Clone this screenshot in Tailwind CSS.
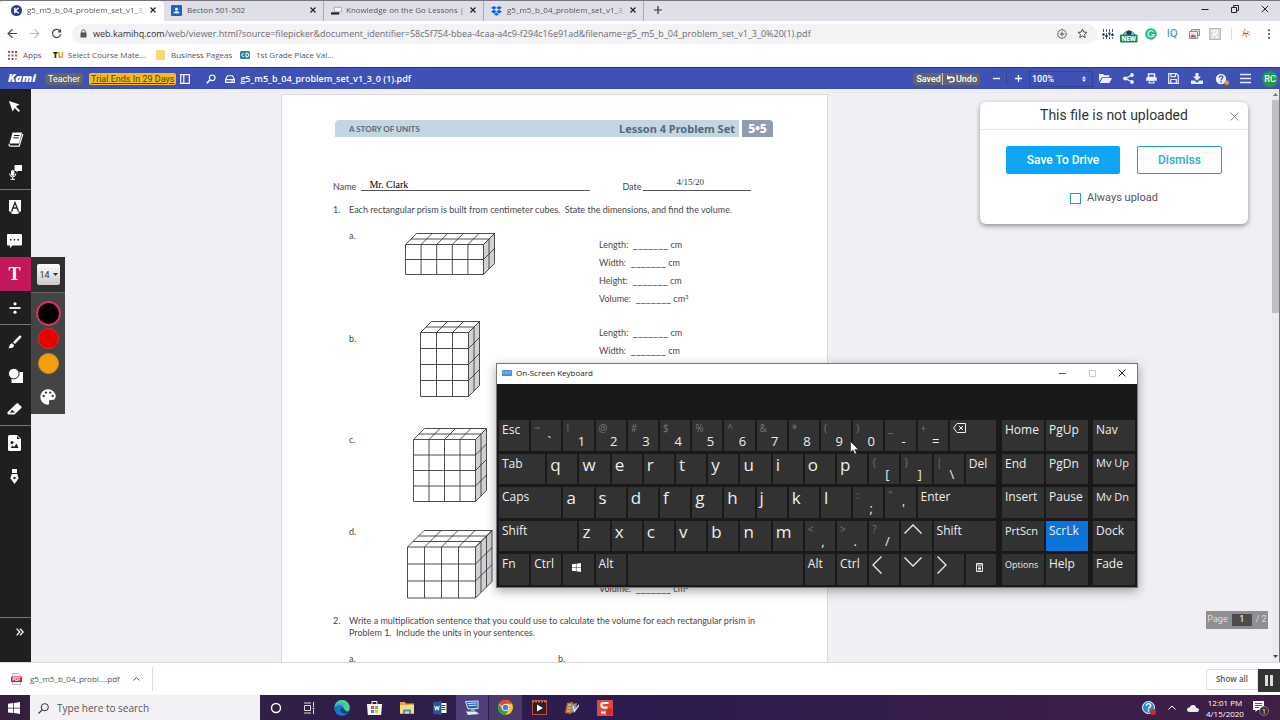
<!DOCTYPE html>
<html lang="en">
  <head>
    <meta charset="UTF-8" />
    <meta name="viewport" content="width=device-width, initial-scale=1.0" />
    <title>g5_m5_b_04_problem_set_v1_3_0 (1).pdf</title>
    <script src="https://cdn.jsdelivr.net/npm/@tailwindcss/browser@4"></script>
  </head>
  <body
    class="relative flex h-screen flex-col overflow-hidden border-t border-[#77737f] bg-white font-['Open_Sans','Noto_Sans',sans-serif] text-[#333]"
  >
    <!-- Tab strip -->
    <header class="flex h-5 shrink-0 bg-[#dfdfe8] text-[8px] text-[#55565c]">
      <div class="flex w-[164px] items-center rounded-t bg-white pr-[5px] pb-0.5 pl-[11px]">
        <svg class="size-[11px] shrink-0" viewBox="0 0 12 12">
          <circle cx="6" cy="6" r="6" fill="#2b3990" />
          <path d="M4.2 3v6M8.4 3 4.6 6.2 8.4 9" stroke="#fff" stroke-width="1.6" fill="none" />
        </svg>
        <span
          class="ml-[5px] flex-1 overflow-hidden whitespace-nowrap mask-r-from-90% mask-r-to-100%"
          >g5_m5_b_04_problem_set_v1_3_0 (1)</span
        >
        <button class="flex size-3 items-center justify-center" aria-label="Close tab">
          <svg class="size-[6px]" viewBox="0 0 6 6"><path d="M.5.5l5 5M5.5.5l-5 5" stroke="#222" stroke-width="1.2" /></svg>
        </button>
      </div>
      <div class="flex w-[160px] items-center border-r border-[#a9a9b4] pr-1 pb-0.5 pl-[7px]">
        <svg class="size-[11px] shrink-0" viewBox="0 0 12 12">
          <rect width="12" height="12" rx="1" fill="#1a66d0" />
          <circle cx="6" cy="4.6" r="1.6" fill="#fff" />
          <path d="M2.8 9c0-3 6.4-3 6.4 0z" fill="#fff" />
        </svg>
        <span class="ml-[5px] flex-1 whitespace-nowrap">Becton 501-502</span>
        <button class="flex size-3 items-center justify-center" aria-label="Close tab">
          <svg class="size-[6px]" viewBox="0 0 6 6"><path d="M.5.5l5 5M5.5.5l-5 5" stroke="#222" stroke-width="1.2" /></svg>
        </button>
      </div>
      <div class="flex w-[160px] items-center border-r border-[#a9a9b4] pr-1 pb-0.5 pl-[7px]">
        <svg class="size-[11px] shrink-0" viewBox="0 0 12 12">
          <path d="M3.5 2.5h8v5h-8z" fill="#f4f4f6" stroke="#888" stroke-width=".7" />
          <path d="M0 8h9v2.4H0z" fill="#222" />
        </svg>
        <span
          class="ml-1 flex-1 overflow-hidden whitespace-nowrap mask-r-from-95% mask-r-to-100%"
          >Knowledge on the Go Lessons | Virtual</span
        >
        <button class="flex size-3 items-center justify-center" aria-label="Close tab">
          <svg class="size-[6px]" viewBox="0 0 6 6"><path d="M.5.5l5 5M5.5.5l-5 5" stroke="#222" stroke-width="1.2" /></svg>
        </button>
      </div>
      <div class="flex w-[160px] items-center border-r border-[#a9a9b4] pr-1 pb-0.5 pl-[7px]">
        <svg class="size-[11px] shrink-0" viewBox="0 0 12 12">
          <path
            d="M3.3 1 0 3.1l3.3 2.1L6 3.1zM8.7 1 6 3.1l2.7 2.1L12 3.1zM0 7.3l3.3 2.1L6 7.3 3.3 5.2zM8.7 5.2 6 7.3l2.7 2.1L12 7.3zM3.4 10 6 11.7 8.6 10 6 8.1z"
            fill="#0a62f0"
          />
        </svg>
        <span
          class="ml-[5px] flex-1 overflow-hidden whitespace-nowrap mask-r-from-90% mask-r-to-100%"
          >g5_m5_b_04_problem_set_v1_3_0 (1)</span
        >
        <button class="flex size-3 items-center justify-center" aria-label="Close tab">
          <svg class="size-[6px]" viewBox="0 0 6 6"><path d="M.5.5l5 5M5.5.5l-5 5" stroke="#222" stroke-width="1.2" /></svg>
        </button>
      </div>
      <button class="flex w-7 items-center justify-center pb-0.5" aria-label="New tab">
        <svg class="size-2" viewBox="0 0 8 8"><path d="M4 0v8M0 4h8" stroke="#333" stroke-width="1.2" /></svg>
      </button>
      <div class="ml-auto flex pb-1">
        <button class="flex w-[30px] items-center justify-center" aria-label="Minimize">
          <svg class="size-2" viewBox="0 0 8 8"><path d="M.5 4.5h7" stroke="#222" /></svg>
        </button>
        <button class="flex w-[30px] items-center justify-center" aria-label="Restore">
          <svg class="size-2" viewBox="0 0 8 8">
            <path d="M.5 2.5h5v5h-5zM2.5 2.5v-2h5v5h-2" fill="none" stroke="#222" />
          </svg>
        </button>
        <button class="flex w-[30px] items-center justify-center" aria-label="Close">
          <svg class="size-2" viewBox="0 0 8 8"><path d="M.8.8l6.4 6.4M7.2.8.8 7.2" stroke="#222" /></svg>
        </button>
      </div>
    </header>

    <!-- Address bar -->
    <div class="flex h-[25px] shrink-0 items-center">
      <div class="flex w-[72px] items-center gap-[11px] pl-[7px]">
        <button aria-label="Back">
          <svg class="size-[11px]" viewBox="0 0 12 12"><path d="M11 6H1.5M6 1.2 1.2 6 6 10.8" stroke="#444" stroke-width="1.3" fill="none" /></svg>
        </button>
        <button aria-label="Forward">
          <svg class="size-[11px]" viewBox="0 0 12 12"><path d="M1 6h9.5M6 1.2 10.8 6 6 10.8" stroke="#bbb" stroke-width="1.2" fill="none" /></svg>
        </button>
        <button aria-label="Reload">
          <svg class="size-[11px]" viewBox="0 0 12 12">
            <path d="M10 3.6A4.5 4.5 0 1 0 10.5 7" stroke="#444" stroke-width="1.3" fill="none" />
            <path d="M11 .8v4H7z" fill="#444" />
          </svg>
        </button>
      </div>
      <label class="flex h-5 flex-1 items-center rounded-full bg-[#f3f2f5] pr-[9px] pl-[7px] text-[9px]">
        <svg class="size-[9px]" viewBox="0 0 9 9">
          <rect x="1.5" y="3.5" width="6" height="5" rx=".6" fill="#555" />
          <path d="M2.8 4V2.5a1.7 1.7 0 0 1 3.4 0V4" stroke="#555" fill="none" />
        </svg>
        <span class="ml-[5px] text-[#333]">web.kamihq.com</span>
        <input
          type="text"
          aria-label="Address"
          class="min-w-0 flex-1 text-[#6d6d73] outline-none"
          value="/web/viewer.html?source=filepicker&amp;document_identifier=58c5f754-bbea-4caa-a4c9-f294c16e91ad&amp;filename=g5_m5_b_04_problem_set_v1_3_0%20(1).pdf"
        />
        <svg class="size-[10px]" viewBox="0 0 10 10">
          <path d="M5 2.5v5M2.5 5h5" stroke="#555" />
          <circle cx="5" cy="5" r="4.3" fill="none" stroke="#555" stroke-width=".9" />
        </svg>
        <svg class="ml-[10px] size-[11px]" viewBox="0 0 12 12">
          <path d="m6 1.2 1.4 3.2 3.500.3-2.700 2.300.8 3.500L6 8.700 3 10.500 3.800 7 1.100 4.700l3.500-.3z" fill="none" stroke="#444" />
        </svg>
      </label>
      <div class="grid w-[129px] grid-cols-6 items-center justify-items-center">
        <svg class="size-3" viewBox="0 0 12 12">
          <path d="M1.5 1v10M4.5 1v10M7.5 1v10M10.5 1v10" stroke="#4a5a78" stroke-dasharray="3 1" />
          <path d="M.3 6.5h2.4M3.3 8h2.4M6.3 5.5h2.4M9.3 7h2.4" stroke="#25406e" stroke-width="1.8" />
        </svg>
        <svg class="mt-0.5 h-4 w-[18px]" viewBox="0 0 18 16">
          <path d="M3 8a6.5 6.5 0 0 1 12 0" fill="#b9cfdf" stroke="#48708f" />
          <circle cx="9" cy="6" r="2.6" fill="#123a5c" />
          <rect y="7.5" width="17.5" height="8" rx="1" fill="#168a45" />
          <text x="8.800" y="13.800" font-size="6" font-weight="800" fill="#fff" text-anchor="middle">NEW</text>
        </svg>
        <svg class="size-3" viewBox="0 0 12 12">
          <circle cx="6" cy="6" r="5.8" fill="#12bf8c" />
          <path d="M8.6 4.2A3.1 3.1 0 1 0 9 6.600H6.500M9 6v2.600" fill="none" stroke="#fff" stroke-width="1.1" />
        </svg>
        <span class="text-[10px] font-semibold text-[#3d9bd0]">IQ</span>
        <svg class="size-3" viewBox="0 0 12 12">
          <path d="M3.5 1.5h8v6h-8z" fill="#ddd" stroke="#777" stroke-width=".8" />
          <path d="M1.5 3.5h8v7h-8z" fill="#eee" stroke="#777" stroke-width=".8" />
          <path d="M2.5 9.5a3 3 0 0 1 3-3v3z" fill="#d94134" />
          <path d="M5.5 9.5v-3a3 3 0 0 1 2.5 3z" fill="#3777d4" />
        </svg>
        <svg class="size-3" viewBox="0 0 12 12">
          <rect x=".5" y=".5" width="11" height="11" fill="#dadada" stroke="#bbb" />
          <path d="M3.500 10 5.500 2.500c4-.8 4 3 0 3.600L8.800 10M2.500 3.500 5 2.500" fill="none" stroke="#fff" stroke-width="1.2" />
        </svg>
      </div>
      <div class="ml-[5px] flex h-3 w-[49px] items-center justify-between border-l border-[#ddd] px-2">
        <svg class="size-[11px]" viewBox="0 0 11 11">
          <path d="M5 .5v2.500M2.500 3.500l2 1M7 3.800l2.500.3M4 7l-2 .5M5.500 6.500 7 9.500M8 6.500h1.500" stroke="#e8835f" stroke-width="1.100" />
          <path d="M3 5.500h5" stroke="#c04a40" stroke-width="1.300" />
        </svg>
        <button aria-label="Menu">
          <svg class="h-[10px] w-[6px]" viewBox="0 0 6 10">
            <circle cx="3" cy="1.200" r="1" fill="#444" /><circle cx="3" cy="5" r="1" fill="#444" /><circle cx="3" cy="8.800" r="1" fill="#444" />
          </svg>
        </button>
      </div>
    </div>

    <!-- Bookmarks -->
    <nav class="flex h-[21px] shrink-0 items-start pt-0.5 pl-2 text-[8px] leading-[14px] text-[#55565c]">
      <a href="#" class="flex w-[45px] items-center gap-[6px]">
        <svg class="size-[9px]" viewBox="0 0 9 9">
          <path d="M0 0h2v2H0zM7 3.5h2v2H7zM3.5 7h2v2h-2z" fill="#d8433a" />
          <path d="M3.5 0h2v2h-2zM7 0h2v2H7z" fill="#c0392b" />
          <path d="M0 3.5h2v2H0zM0 7h2v2H0z" fill="#2e9a54" />
          <path d="M3.5 3.5h2v2h-2z" fill="#3a78d8" />
          <path d="M7 7h2v2H7z" fill="#e5ad2a" />
        </svg>
        Apps
      </a>
      <a href="#" class="flex w-[103px] items-center gap-1">
        <span class="text-[8px] font-extrabold text-[#222]">T<span class="text-[#e3a31c]">U</span></span>
        Select Course Mate...
      </a>
      <a href="#" class="flex w-[84px] items-center gap-[6px]">
        <span class="h-[10px] w-[9px] rounded-[1px] bg-[#f5d978]"></span>
        Business Pageas
      </a>
      <a href="#" class="flex items-center gap-[6px]">
        <svg class="h-[8px] w-[10px]" viewBox="0 0 10 8">
          <rect width="10" height="8" rx="1.500" fill="#2a7f95" />
          <path d="M4 2.500a1.600 1.600 0 1 0 0 3M6 2v4h.8a1.500 1.500 0 0 0 0-4z" stroke="#fff" fill="none" />
        </svg>
        1st Grade Place Val...
      </a>
    </nav>

    <!-- Kami toolbar -->
    <div
      class="flex h-[22px] shrink-0 items-center border-t border-[#33387c] bg-[#3f51b5] pr-0.5 pl-2 font-['Roboto',sans-serif] text-[9px] text-white"
    >
      <span class="w-[37px] font-['Open_Sans',sans-serif] text-[11px] font-extrabold italic">Kami</span>
      <span class="rounded-xs bg-[#62636c] px-[3px] leading-3">Teacher</span>
      <a href="#" class="ml-[6px] rounded-xs bg-[#f5b921] px-0.5 leading-3 text-[#5b4300] underline">Trial Ends In 29 Days</a>
      <button class="ml-1" aria-label="Toggle side panel">
        <svg class="size-[10px]" viewBox="0 0 10 10">
          <path d="M.7.700h8.600v8.600H.7zM3.800.700v8.600" fill="none" stroke="#fff" stroke-width="1.200" />
        </svg>
      </button>
      <button class="ml-4" aria-label="Search">
        <svg class="size-[10px]" viewBox="0 0 10 10">
          <circle cx="6.200" cy="3.800" r="2.800" fill="none" stroke="#fff" stroke-width="1.200" />
          <path d="M4 6 .8 9.200" stroke="#fff" stroke-width="1.600" />
        </svg>
      </button>
      <svg class="ml-[9px] h-[8px] w-[10px]" viewBox="0 0 10 8">
        <path d="M.6 4.600 2.500.700h5l1.900 3.900v2.800H.6zM.6 4.600h8.800M6.500 6h1.500" fill="none" stroke="#fff" stroke-width="1.100" />
      </svg>
      <span class="ml-[5px] font-['Open_Sans',sans-serif] text-[9px] font-semibold">g5_m5_b_04_problem_set_v1_3_0 (1).pdf</span>

      <div class="ml-auto flex items-center rounded-xs bg-[#62636c] px-[3px] leading-3 font-medium">
        <span class="border-r border-[#c8c8d0] pr-px">Saved</span>
        <button class="flex items-center gap-px pl-1">
          <svg class="size-[8px]" viewBox="0 0 8 8">
            <path d="M1.500 2.200h3.300a2.300 2.300 0 0 1 0 4.700H2" fill="none" stroke="#fff" stroke-width="1.400" />
            <path d="M0 0v4.200h4z" fill="#fff" />
          </svg>
          Undo
        </button>
      </div>
      <button class="ml-[6px] flex w-5 items-center justify-center self-stretch" aria-label="Zoom out">
        <svg class="size-[7px]" viewBox="0 0 7 7"><path d="M0 3.500h7" stroke="#fff" stroke-width="1.400" /></svg>
      </button>
      <button class="flex h-3 w-[23px] items-center justify-center border-l border-[#34428f]" aria-label="Zoom in">
        <svg class="size-[7px]" viewBox="0 0 7 7"><path d="M0 3.500h7M3.500 0v7" stroke="#fff" stroke-width="1.400" /></svg>
      </button>
      <label class="relative flex h-4 w-[64px] items-center border border-[#34428f]">
        <select class="w-full appearance-none pl-[2px] leading-3 font-medium" aria-label="Zoom">
          <option>100%</option>
        </select>
        <svg class="absolute right-1.5 h-[6px] w-[4px]" viewBox="0 0 4 6"><path d="M0 2.500 2 .3l2 2.200zM0 3.500l2 2.200 2-2.200z" fill="#fff" /></svg>
      </label>
      <div class="flex w-[164px] items-center justify-around">
        <button aria-label="Open">
          <svg class="h-[11px] w-[13px]" viewBox="0 0 13 11">
            <path d="M0 8.500V1h4l1.200 1.300h5v1.900H3z" fill="#eceefa" />
            <path d="M3.500 5H13l-2.600 5H.8z" fill="#eceefa" />
          </svg>
        </button>
        <button aria-label="Share">
          <svg class="size-[11px]" viewBox="0 0 11 11">
            <path d="M9 2 2.500 5.500 9 9" fill="none" stroke="#eceefa" stroke-width="1.300" />
            <circle cx="9" cy="2" r="1.900" fill="#eceefa" /><circle cx="2.200" cy="5.500" r="2.100" fill="#eceefa" /><circle cx="9" cy="9" r="1.900" fill="#eceefa" />
          </svg>
        </button>
        <button aria-label="Print">
          <svg class="size-[11px]" viewBox="0 0 11 11">
            <path d="M2.500 4.500V1h6v3.500M1 8V5.500Q1 4.500 2 4.500h7q1 0 1 1V8" fill="none" stroke="#eceefa" stroke-width="1.500" />
            <path d="M1 5h9v2H1zM2.500 7h6v3.500h-6z" fill="#eceefa" />
            <path d="M3.500 8h4v1.300h-4z" fill="#3f51b5" />
          </svg>
        </button>
        <button aria-label="Save">
          <svg class="size-[11px]" viewBox="0 0 11 11">
            <path d="M.7.700h7.800l1.800 1.800v7.800H.7zM3 .7v3h4.500v-3M2.700 10V6.500h5.600V10" fill="none" stroke="#eceefa" stroke-width="1.200" />
          </svg>
        </button>
        <button aria-label="Download">
          <svg class="size-[12px]" viewBox="0 0 12 12">
            <path d="M4.500 0h3v3.500H10L6 7.800 2 3.500h2.500z" fill="#eceefa" />
            <path d="M0 7.500h3.500L6 9.800l2.500-2.300H12V11H0z" fill="#eceefa" />
          </svg>
        </button>
        <button aria-label="Help">
          <svg class="h-[12px] w-[14px]" viewBox="0 0 14 12">
            <circle cx="6" cy="6" r="5.200" fill="#eceefa" />
            <path d="M4.300 4.700c0-2.400 3.600-2.200 3.500-.2C7.800 5.700 6 5.700 6 7.200M6 8v1.400" fill="none" stroke="#3f51b5" stroke-width="1.300" />
            <circle cx="11.700" cy="9.700" r="2.300" fill="#f09a2a" />
          </svg>
        </button>
        <button aria-label="Menu">
          <svg class="size-[11px]" viewBox="0 0 11 11"><path d="M0 1.500h11M0 5.500h11M0 9.500h11" stroke="#eceefa" stroke-width="1.600" /></svg>
        </button>
      </div>
      <button class="ml-[5px] size-4 rounded-full bg-[#1d9a4c] leading-4 font-medium">RC</button>
    </div>

    <!-- Viewer -->
    <main class="relative flex min-h-0 flex-1 bg-[#f1eff3]">
      <!-- Tools -->
      <aside class="flex w-[31px] shrink-0 flex-col bg-[#1f1f1f]">
        <button class="flex h-[34px] items-center justify-center pr-0.5" aria-label="Select">
          <svg class="size-[13px]" viewBox="0 0 13 13"><path d="M1 1l10.500 3.600-3.600 2L12 10.700 10.700 12 6.600 7.900l-2 3.600z" fill="#fff" /></svg>
        </button>
        <button class="flex h-[33px] items-center justify-center" aria-label="Dictionary">
          <svg class="h-[15px] w-[16px]" viewBox="0 0 16 15">
            <path d="M4.500.500h9.500L11 11.500H1.500z" fill="#fff" />
            <path d="M1.200 12q-.5 2.200 1.500 2.200h8.500L14.800 2" fill="none" stroke="#fff" stroke-width="1.200" />
            <path d="M6 3.500h5.500M5.300 5.800h5.500" stroke="#1f1f1f" />
          </svg>
        </button>
        <button class="flex h-[34px] items-center justify-center border-b border-[#777]" aria-label="Text to speech">
          <svg class="h-[15px] w-[14px]" viewBox="0 0 14 15">
            <path d="M5.500 0H13v6H9L7.500 7.500V6h-2z" fill="#fff" />
            <rect x="2" y="5" width="3.400" height="6" rx="1.700" fill="#fff" />
            <path d="M.7 8.500q0 3.500 3 3.500t3-3.500M3.700 12v2.500M1.500 14.300h4.500" fill="none" stroke="#fff" />
          </svg>
        </button>
        <button class="flex h-[34px] items-center justify-center pr-0.5" aria-label="Markup">
          <svg class="h-[14px] w-[12px]" viewBox="0 0 12 14">
            <path d="M0 0h12v11.500h-1.500L9 14H3L1.500 11.500H0z" fill="#fff" />
            <path d="M2.500 11.500 6 2.500l3.500 9M3.800 8h4.400" fill="none" stroke="#1f1f1f" stroke-width="1.300" />
          </svg>
        </button>
        <button class="flex h-[33px] items-center justify-center pr-0.5" aria-label="Comment">
          <svg class="h-[14px] w-[15px]" viewBox="0 0 15 14">
            <path d="M1 0h13q1 0 1 1v9.500q0 1-1 1H5.500L3 14v-2.500H1q-1 0-1-1V1q0-1 1-1z" fill="#fff" />
            <path d="M3 5.800h1.500M6.700 5.800h1.500M10.400 5.800h1.500" stroke="#1f1f1f" stroke-width="1.500" />
          </svg>
        </button>
        <button
          class="flex h-[34px] items-center justify-center bg-[#c2185b] pr-0.5 font-['Liberation_Serif',serif] text-[18px] font-bold text-white"
        >
          T
        </button>
        <button class="flex h-[34px] items-center justify-center border-b border-[#777] pr-0.5" aria-label="Equation">
          <svg class="size-[12px]" viewBox="0 0 12 12">
            <path d="M.5 6h11" stroke="#fff" stroke-width="1.800" />
            <circle cx="6" cy="1.800" r="1.600" fill="#fff" /><circle cx="6" cy="10.200" r="1.600" fill="#fff" />
          </svg>
        </button>
        <button class="flex h-[34px] items-center justify-center pr-0.5" aria-label="Draw">
          <svg class="size-[14px]" viewBox="0 0 14 14">
            <path d="M5 7.200 11.300.7q1-.7 1.800.2t0 1.700L7 9z" fill="#fff" />
            <path d="M4 8.200 6 10q.3 3.500-5.700 3.300 1-.6 1.200-2.500T4 8.200z" fill="#fff" />
          </svg>
        </button>
        <button class="flex h-[33px] items-center justify-center" aria-label="Shapes">
          <svg class="size-[15px]" viewBox="0 0 15 15">
            <path d="M6 4h9v11H3.500V8z" fill="#fff" />
            <circle cx="5.800" cy="5.600" r="5.300" fill="#fff" stroke="#1f1f1f" />
          </svg>
        </button>
        <button class="flex h-[34px] items-center justify-center border-b border-[#777] pr-0.5" aria-label="Eraser">
          <svg class="h-[12px] w-[15px]" viewBox="0 0 15 12">
            <path d="M9.500.5q.8-.6 1.500 0l3.300 3q.7.700 0 1.400L7.500 11.500h-6q-1.800-.8-.8-2.500z" fill="#fff" />
            <path d="m3 9.800 2-3 3 2.800z" fill="#1f1f1f" />
          </svg>
        </button>
        <button class="flex h-[34px] items-center justify-center pr-0.5" aria-label="Insert image">
          <svg class="h-[16px] w-[13px]" viewBox="0 0 13 16">
            <path d="M1.500 0H9l4 4v10.500q0 1.500-1.500 1.500h-10Q0 16 0 14.500v-13Q0 0 1.500 0z" fill="#fff" />
            <circle cx="4" cy="7.500" r="1.500" fill="#1f1f1f" />
            <path d="m2.500 13 2-2.500L6 12l2.500-3.500 2 4.500zM9 1v3h3" fill="#1f1f1f" />
          </svg>
        </button>
        <button class="flex h-[33px] items-center justify-center pr-0.5" aria-label="Signature">
          <svg class="h-[15px] w-[9px]" viewBox="0 0 9 15">
            <path d="M2 0h5v4H2zM1.800 5h5.400l1.500 4.300L4.500 15 .3 9.300z" fill="#fff" />
            <circle cx="4.500" cy="9" r="1.200" fill="#1f1f1f" />
          </svg>
        </button>
        <button class="mt-auto flex h-[45px] justify-end border-t border-[#777] pt-[10px] pr-[7px]" aria-label="Expand">
          <svg class="size-[8px]" viewBox="0 0 8 8"><path d="M.6.600 3.800 4 .6 7.400M4 .6 7.200 4 4 7.400" fill="none" stroke="#fff" stroke-width="1.300" /></svg>
        </button>
      </aside>

      <!-- Text tool options -->
      <div class="absolute top-[168px] left-[31px] z-10 flex w-[34px] flex-col items-center bg-[#444] pb-[9px]">
        <div class="flex h-[36px] w-full items-center justify-center border-b border-[#666] bg-[#2f2f2f]">
          <label class="relative flex h-[21px] w-[23px] items-center rounded-xs bg-linear-to-b from-white to-[#c9c9c9]">
            <select class="w-full appearance-none pl-[3px] font-['Roboto',sans-serif] text-[9px] leading-3" aria-label="Font size">
              <option>14</option>
            </select>
            <svg class="absolute right-[2px] h-[3px] w-[5px]" viewBox="0 0 5 3"><path d="M0 0h5L2.500 3z" fill="#333" /></svg>
          </label>
        </div>
        <button class="mt-2 size-[25px] rounded-full border-2 border-[#d6336c] bg-black" aria-label="Black"></button>
        <button class="mt-[2px] size-[21px] rounded-full border border-[#c33] bg-[#e60000]" aria-label="Red"></button>
        <button class="mt-1 size-[21px] rounded-full border border-[#c98a2a] bg-[#f59e0b]" aria-label="Orange"></button>
        <button class="mt-[15px]" aria-label="More colours">
          <svg class="size-[16px]" viewBox="0 0 16 16">
            <path d="M8 .300a7.700 7.700 0 1 0 0 15.400q1.800-.3 1-2.500-.5-2.200 1.500-2.400 5.200.7 5.200-3.500A7.700 7.700 0 0 0 8 .3z" fill="#fff" />
            <circle cx="3.600" cy="7" r="1.200" fill="#444" /><circle cx="6" cy="3.600" r="1.200" fill="#444" /><circle cx="10.200" cy="3.600" r="1.200" fill="#444" /><circle cx="12.700" cy="7" r="1.200" fill="#444" />
          </svg>
        </button>
      </div>

      <!-- Worksheet page -->
      <article
        class="mt-[5px] ml-[250px] w-[547px] shrink-0 overflow-hidden border border-b-0 border-[#dcdae0] bg-white pt-[25px] pr-[54px] pl-[51px] font-['Lato',sans-serif] text-[9px] leading-3 text-[#484848]"
      >
        <div class="ml-[2px] flex h-[17px] items-center gap-[3px]">
          <div class="flex h-full flex-1 items-center justify-between rounded-tl bg-[#c4d6e2] pr-1 pl-[14px] text-[#56697a]">
            <span class="text-[8px] font-bold">A STORY OF UNITS</span>
            <h1 class="font-['Noto_Sans',sans-serif] text-[11px] font-bold">Lesson 4 Problem Set</h1>
          </div>
          <span class="h-full w-[31px] rounded-tr bg-[#929cb0] text-center font-['Noto_Sans',sans-serif] text-[12px] leading-[17px] font-extrabold text-white">5•5</span>
        </div>

        <div class="mt-[38px] flex h-4 items-end">
          <span class="leading-2">Name</span>
          <span class="ml-[5px] h-full w-[229px] border-b border-[#555] pl-2 font-['Liberation_Serif',serif] text-[10px] leading-5 text-black">Mr. Clark</span>
          <span class="ml-8 leading-2">Date</span>
          <span class="ml-[2px] h-full w-[108px] border-b border-[#555] pl-[33px] font-['Liberation_Serif',serif] text-[9px] leading-[14px] text-[#333]">4/15/20</span>
        </div>

        <ol class="mt-[13px]">
          <li class="grid grid-cols-[16px_1fr]">
            <span>1.</span>
            <p class="whitespace-pre">Each rectangular prism is built from centimeter cubes.  State the dimensions, and find the volume.</p>
            <div class="col-start-2 mt-[10px]">
              <div class="grid h-[94px] grid-cols-[16px_170px_1fr]">
                <span class="pt-1">a.</span>
                <svg class="mt-[7px] justify-self-center" data-prism="5,2,2,15.6,15"></svg>
                <div class="pt-[10px] pl-16 leading-[18px]" data-fields></div>
              </div>
              <div class="grid h-[106px] grid-cols-[16px_170px_1fr]">
                <span class="pt-[13px]">b.</span>
                <svg class="mt-px justify-self-center" data-prism="3,4,2,16,16"></svg>
                <div class="pt-1 pl-16 leading-[18px]" data-fields></div>
              </div>
              <div class="grid h-[100px] grid-cols-[16px_170px_1fr]">
                <span class="pt-2">c.</span>
                <svg class="mt-[2px] justify-self-center" data-prism="4,4,2,15.5,15.5"></svg>
                <div class="pl-16 leading-[18px]" data-fields></div>
              </div>
              <div class="grid h-[89px] grid-cols-[16px_170px_1fr]">
                <span>d.</span>
                <svg class="mt-1 justify-self-center" data-prism="4,3,3,17,17"></svg>
                <div class="pl-16 leading-[18px]" data-fields></div>
              </div>
            </div>
          </li>
          <li class="grid grid-cols-[16px_1fr]">
            <span>2.</span>
            <p class="whitespace-pre">Write a multiplication sentence that you could use to calculate the volume for each rectangular prism in
Problem 1.  Include the units in your sentences.</p>
            <div class="col-start-2 mt-[14px] grid grid-cols-[209px_1fr]">
              <span>a.</span>
              <span>b.</span>
            </div>
          </li>
        </ol>
      </article>

      <!-- Upload notice -->
      <section
        class="absolute top-[13px] right-8 w-[268px] rounded-md bg-white font-['Roboto',sans-serif] shadow-[0_2px_5px_rgba(0,0,0,0.4)]"
      >
        <div class="relative border-b border-[#e6e6e6] text-center">
          <h2 class="text-[14px] leading-[27px] text-[#333]">This file is not uploaded</h2>
          <button class="absolute top-[10px] right-[9px]" aria-label="Close">
            <svg class="size-[9px]" viewBox="0 0 9 9"><path d="M.5.500l8 8M8.500.500l-8 8" stroke="#888" /></svg>
          </button>
        </div>
        <div class="flex justify-center gap-[17px] pt-4">
          <button class="h-7 w-[114px] rounded-xs bg-[#0ea5f7] text-[12px] font-medium text-white">Save To Drive</button>
          <button class="h-7 w-[85px] rounded-xs border border-[#1e9fc9] text-[12px] font-medium text-[#29a9dc]">Dismiss</button>
        </div>
        <label class="mt-4 flex items-center justify-center gap-[6px] pb-[18px] text-[11px] leading-4 text-[#555]">
          <input type="checkbox" class="size-[11px] appearance-none border border-[#1e9fc9] bg-white" />
          Always upload
        </label>
      </section>

      <!-- Page counter -->
      <div
        class="absolute right-3 bottom-[33px] flex h-[18px] w-[62px] items-center justify-center gap-1 bg-[#8f8e91] font-['Roboto',sans-serif] text-[9px] text-[#dedede]"
      >
        <label for="page">Page</label>
        <input id="page" type="text" value="1" class="h-3 w-5 bg-[#4b4b4e] text-center text-white" />
        <span>/ 2</span>
      </div>

      <!-- Scrollbar -->
      <div class="ml-auto flex w-2 flex-col items-center justify-between border-r border-[#77737f] bg-[#eceaee] py-1">
        <svg class="h-[3px] w-[5px]" viewBox="0 0 5 3"><path d="M0 3h5L2.500 0z" fill="#777" /></svg>
        <div class="mt-1 mb-auto h-[213px] w-full bg-[#c1bfc3]"></div>
        <svg class="h-[3px] w-[5px]" viewBox="0 0 5 3"><path d="M0 0h5L2.500 3z" fill="#444" /></svg>
      </div>
    </main>

    <!-- Download shelf -->
    <footer class="flex h-[33px] shrink-0 items-center border-t border-[#dcdae0] bg-white text-[8px] text-[#55565c]">
      <div class="flex h-6 w-[153px] items-center border-r border-[#ddd] pl-[11px]">
        <svg class="h-[12px] w-[11px]" viewBox="0 0 11 12">
          <path d="M1.500.500h6l2 2v9h-8z" fill="#eee" stroke="#aaa" stroke-width=".7" />
          <rect y="3.500" width="11" height="5.500" rx=".6" fill="#c3202f" />
          <text x="5.500" y="7.800" font-size="4.500" font-weight="700" fill="#fff" text-anchor="middle">PDF</text>
        </svg>
        <span class="ml-2">g5_m5_b_04_probl....pdf</span>
        <button class="mr-3 ml-auto" aria-label="More">
          <svg class="h-[4px] w-[7px]" viewBox="0 0 7 4"><path d="M.5 3.500l3-3 3 3" fill="none" stroke="#555" /></svg>
        </button>
      </div>
      <button class="mr-[22px] ml-auto h-[21px] w-[52px] rounded-l-xs border border-[#ddd] font-semibold">Show all</button>
    </footer>
    <button
      class="absolute right-0 bottom-7 flex h-[23px] w-[22px] items-center justify-center gap-[2px] bg-[#333]"
      aria-label="Pause"
    >
      <span class="h-[11px] w-[3px] bg-[#ddd]"></span>
      <span class="h-[11px] w-[3px] bg-[#ddd]"></span>
    </button>

    <!-- Taskbar -->
    <div class="flex h-[25px] shrink-0 items-stretch bg-linear-to-r from-[#35203f] via-[#2c1b4e] to-[#401f45]">
      <button class="flex w-[30px] items-center justify-center pr-0.5" aria-label="Start">
        <svg class="size-[12px]" viewBox="0 0 12 12"><path d="M0 1.700 5.200 1v4.700H0zM5.900.900 12 0v5.700H5.900zM0 6.400h5.200v4.700L0 10.400zM5.900 6.400H12V12l-6.100-.9z" fill="#fff" /></svg>
      </button>
      <label class="flex w-[230px] items-center bg-[#f3f1f5] pt-px pl-2">
        <svg class="size-[11px]" viewBox="0 0 11 11">
          <circle cx="6.800" cy="4.200" r="3.600" fill="none" stroke="#333" />
          <path d="M4.200 6.800.5 10.500" stroke="#333" stroke-width="1.200" />
        </svg>
        <input
          type="text"
          placeholder="Type here to search"
          aria-label="Search"
          class="ml-2 w-[180px] text-[10px] outline-none placeholder:text-[#555]"
        />
      </label>
      <div class="flex w-[361px]">
        <button class="flex flex-1 items-center justify-center" aria-label="Cortana">
          <svg class="size-[12px]" viewBox="0 0 12 12"><circle cx="6" cy="6" r="4.500" fill="none" stroke="#fff" stroke-width="1.400" /></svg>
        </button>
        <button class="flex flex-1 items-center justify-center" aria-label="Task view">
          <svg class="size-[12px]" viewBox="0 0 12 12">
            <path d="M1.500 3.500h6v5h-6zM1 1h7M1 11h7M10.500 0v5M10.500 8v4" fill="none" stroke="#ddd" />
            <circle cx="10.500" cy="6.500" r="1" fill="#ddd" />
          </svg>
        </button>
        <button class="flex flex-1 items-center justify-center" aria-label="Edge">
          <svg class="size-[16px]" viewBox="0 0 16 16">
            <circle cx="8" cy="8" r="7.800" fill="#1679c9" />
            <path d="M.5 7A7.600 7.600 0 0 1 15.700 8q0 3-3.200 3.300-3.500 0-2.500-2.200Q9.500 4.500 4.500 5 1.500 5.500.5 7z" fill="#4fd08c" />
            <path d="M.5 7Q1.500 3 6 2.600q5 0 6 4Q9.500 4.500 4.500 5 1.500 5.500.5 7z" fill="#35b6d8" />
            <path d="M10 9.100q-1-1.500-2.600-1Q4.700 12.500 10.500 13.500q2.500 0 4-1.200Q12 12 10 9.100z" fill="#0f3f80" />
          </svg>
        </button>
        <button class="flex flex-1 items-center justify-center" aria-label="Store">
          <svg class="size-[15px]" viewBox="0 0 15 15">
            <path d="M5 4V1.500h5V4" fill="none" stroke="#fff" />
            <path d="M0 4h15l-.8 11H.8z" fill="#fff" />
            <path d="M4 6h3v3H4z" fill="#e34f26" /><path d="M8 6h3v3H8z" fill="#6ab43e" /><path d="M4 10h3v3H4z" fill="#2f8ee0" /><path d="M8 10h3v3H8z" fill="#f1b81b" />
          </svg>
        </button>
        <button class="flex flex-1 items-center justify-center" aria-label="File Explorer">
          <svg class="h-[12px] w-[14px]" viewBox="0 0 14 12">
            <path d="M0 0h5l1 1.500h8V12H0z" fill="#e2a63a" />
            <path d="M0 3h14v8H0z" fill="#f9dc82" />
            <path d="M3 12V7.500h8V12H9V9.500H5V12z" fill="#3b96d6" />
          </svg>
        </button>
        <button class="flex flex-1 items-center justify-center" aria-label="Word">
          <svg class="size-[14px]" viewBox="0 0 14 14">
            <path d="M7 2h6.500v10H7z" fill="#fff" />
            <path d="M8.500 4.500h4M8.500 6.500h4M8.500 8.500h4" stroke="#2b579a" />
            <path d="M0 1.300 8.500 0v14L0 12.700z" fill="#2455a4" />
            <path d="m1.700 4.800 1 4.500 1.300-4 1.300 4 1-4.500" fill="none" stroke="#fff" />
          </svg>
        </button>
        <button class="flex flex-1 items-center justify-center bg-[#50407a]" aria-label="On-Screen Keyboard">
          <svg class="size-[16px]" viewBox="0 0 16 16">
            <path d="M1.500 1.500 14 1v7.500l-10 .5z" fill="#2f62bd" stroke="#d5e1f5" />
            <path d="M3.500 3.500 12.500 3M4.500 5.500l8-.3" stroke="#cfe2ff" />
            <path d="M7 9h4v2H7z" fill="#8fa6cf" />
            <path d="M2 11.500h10l3 2.500-11 1z" fill="#e4e9f2" />
          </svg>
        </button>
        <button class="mr-px ml-px flex flex-1 items-center justify-center bg-[#4b3a69]" aria-label="Chrome">
          <svg class="size-[15px]" viewBox="0 0 16 16">
            <circle cx="8" cy="8" r="8" fill="#f6c52f" />
            <path d="M8 8 1.070 4A8 8 0 0 1 14.930 4L8 4z" fill="#de4a3c" />
            <path d="M1.070 4A8 8 0 0 0 8 16l3.400-6L8 8 4.500 10z" fill="#2f9e57" />
            <circle cx="8" cy="8" r="3.800" fill="#fff" /><circle cx="8" cy="8" r="3" fill="#3f7fe8" />
          </svg>
        </button>
        <button class="flex flex-1 items-center justify-center" aria-label="Video editor">
          <svg class="size-[15px]" viewBox="0 0 15 15">
            <rect x=".5" y=".5" width="14" height="14" fill="#2b2024" stroke="#b5524b" />
            <path d="M0 1.500h15" stroke="#d9685c" stroke-width="2" stroke-dasharray="2 1" />
            <path d="M5 4.500v7l6-3.500z" fill="#fff" />
          </svg>
        </button>
        <button class="flex flex-1 items-center justify-center" aria-label="Games">
          <svg class="size-[14px]" viewBox="0 0 14 14">
            <path d="M2 2 8 1 6 13 0 12z" fill="#c6713a" />
            <path d="M5 3.500 12 2l-2 9-4 1z" fill="#8a8f99" />
            <path d="M3 4h3M2.600 7h3M2.200 10h3" stroke="#f3d9b0" />
            <path d="m8 5 1.500 5L14 4" fill="none" stroke="#ddd" stroke-width="1.500" />
          </svg>
        </button>
        <button class="flex flex-1 items-center justify-center" aria-label="Screencastify">
          <svg class="h-[16px] w-[16px]" viewBox="0 0 16 16">
            <rect width="16" height="16" rx="1" fill="#e2483f" />
            <path d="M11.500 3H6.500Q4 3 4.500 5.500T8 7.500t2 2.500-3 2.500H4" fill="none" stroke="#fff" stroke-width="2.200" />
            <circle cx="12" cy="11.500" r="3.500" fill="#c8322d" />
          </svg>
        </button>
      </div>
      <div class="ml-auto flex items-center pr-[11px] text-[8px] leading-[11px] text-white">
        <svg class="h-[16px] w-[14px]" viewBox="0 0 14 16">
          <circle cx="6.500" cy="7.500" r="6" fill="#1f8fc6" stroke="#fff" />
          <path d="M4.300 5.800c0-3 4.600-2.800 4.400-.2-.1 1.400-2.200 1.400-2.200 3.200M6.500 9.800v1.700" fill="none" stroke="#fff" stroke-width="1.400" />
          <circle cx="11" cy="12" r="3" fill="#d02c2c" />
        </svg>
        <svg class="ml-3 h-[5px] w-[8px]" viewBox="0 0 8 5"><path d="M.5 4.500 4 1l3.500 3.500" fill="none" stroke="#fff" /></svg>
        <svg class="ml-[11px] h-[8px] w-[12px]" viewBox="0 0 12 8"><path d="M3 8Q0 8 0 5.800T2.500 3.600Q3.500.500 6.300 1t2.700 2.800Q12 4 12 6t-2 2z" fill="#eee" /></svg>
        <div class="ml-[7px] w-[38px] text-center whitespace-nowrap">
          <div>12:01 PM</div>
          <div>4/15/2020</div>
        </div>
        <button class="ml-2" aria-label="Notifications">
          <svg class="h-[17px] w-[17px]" viewBox="0 0 17 17">
            <path d="M1 2h11v9H5.500L3.500 13v-2H1z" fill="#fff" />
            <path d="M3 4.500h7M3 6.500h7M3 8.500h4" stroke="#401f45" stroke-width=".8" />
            <circle cx="12" cy="12" r="4.500" fill="#3a2a40" stroke="#999" stroke-width=".7" />
            <text x="12" y="14.500" font-size="7" fill="#fff" text-anchor="middle">1</text>
          </svg>
        </button>
      </div>
    </div>

    <!-- On-screen keyboard window -->
    <section
      class="absolute top-[362px] left-[496px] z-20 flex h-[225px] w-[642px] flex-col border border-[#77757a] bg-[#191919] shadow-[0_3px_10px_rgba(0,0,0,0.35)]"
    >
      <div class="flex h-5 shrink-0 items-center bg-white pb-0.5 pl-[5px] text-[8px] text-[#222]">
        <svg class="h-[6px] w-[10px]" viewBox="0 0 10 6">
          <rect width="10" height="6" rx=".6" fill="#4a90cf" />
          <path d="M1 1.800h8M1 3.200h8" stroke="#bfe0f7" stroke-width=".7" stroke-dasharray="1 .5" />
        </svg>
        <span class="ml-1">On-Screen Keyboard</span>
        <div class="ml-auto flex self-stretch">
          <button class="flex w-[30px] items-center justify-center" aria-label="Minimize">
            <svg class="size-[7px]" viewBox="0 0 7 7"><path d="M0 3.500h7" stroke="#555" /></svg>
          </button>
          <button class="flex w-[30px] items-center justify-center" aria-label="Maximize" disabled>
            <svg class="size-[7px]" viewBox="0 0 7 7"><path d="M.5.500h6v6h-6z" fill="none" stroke="#ccc" /></svg>
          </button>
          <button class="flex w-[30px] items-center justify-center" aria-label="Close">
            <svg class="size-[8px]" viewBox="0 0 8 8"><path d="M.5.500l7 7M7.500.500l-7 7" stroke="#222" /></svg>
          </button>
        </div>
      </div>
      <div class="mt-auto flex h-[167px] gap-[6px] px-[2px] pb-[2px] text-[#eee]">
        <div id="keys" class="grid flex-1 grid-cols-[repeat(31,minmax(0,1fr))] grid-rows-5 gap-x-[2px] gap-y-[3px]"></div>
        <div id="navKeys" class="grid w-[86px] grid-cols-2 grid-rows-5 gap-x-[2px] gap-y-[3px]"></div>
        <div id="sideKeys" class="-ml-px grid w-[42px] grid-rows-5 gap-y-[3px]"></div>
      </div>
    </section>

    <!-- Mouse pointer -->
    <svg class="absolute top-[440px] left-[850px] z-30 h-[14px] w-[9px]" viewBox="0 0 9 14">
      <path d="M.5.500v10.800l2.500-2.300 1.700 4 1.800-.8-1.700-3.800h3.600z" fill="#fff" stroke="#222" stroke-width=".6" />
    </svg>

    <script>
      const SVG = {
        back: '<svg class="mt-[3px] h-[10px] w-[13px]" viewBox="0 0 13 10"><path d="M4 .5h8.500v9H4L.6 5zM6 3l4 4M10 3 6 7" fill="none" stroke="#eee"/></svg>',
        up: '<svg class="mt-[3px] h-[10px] w-[18px]" viewBox="0 0 18 10"><path d="M.5 9.500 9 1l8.500 8.500" fill="none" stroke="#eee" stroke-width="1.300"/></svg>',
        down: '<svg class="mt-[3px] h-[10px] w-[18px]" viewBox="0 0 18 10"><path d="M.5.500 9 9 17.500.5" fill="none" stroke="#eee" stroke-width="1.300"/></svg>',
        left: '<svg class="mt-[2px] h-[18px] w-[10px]" viewBox="0 0 10 18"><path d="M9.500.5 1 9l8.500 8.500" fill="none" stroke="#eee" stroke-width="1.300"/></svg>',
        right: '<svg class="mt-[2px] h-[18px] w-[10px]" viewBox="0 0 10 18"><path d="M.5.5 9 9 .5 17.500" fill="none" stroke="#eee" stroke-width="1.300"/></svg>',
        win: '<svg class="mt-[9px] ml-[6px] size-[9px]" viewBox="0 0 12 12"><path d="M0 1.700 5.200 1v4.700H0zM5.900.9 12 0v5.700H5.900zM0 6.400h5.200v4.700L0 10.400zM5.900 6.400H12V12l-6.100-.9z" fill="#fff"/></svg>',
        menu: '<svg class="mt-[9px] ml-[7px] h-[9px] w-[7px]" viewBox="0 0 7 9"><path d="M.5.5h6v8h-6zM.5 2h6M2 4h3M2 5.500h3M2 7h3" fill="none" stroke="#eee"/></svg>',
      };
      const SPAN = {
        2: "col-span-2",
        3: "col-span-3",
        4: "col-span-4",
        5: "col-span-5",
        11: "col-span-11",
      };
      const KEY = "flex items-start overflow-hidden ";

      // entry: [label, span] for named keys, "x" for letters, "!1" for shifted pairs
      const main = [
        ["Esc", 2], "~`", "!1", "@2", "#3", "$4", "%5", "^6", "&7", "*8", "(9", ")0", "_-", "+=", ["back", 3],
        ["Tab", 3], ..."qwertyuiop", "{[", "}]", "|\\", ["Del", 2],
        ["Caps", 4], ..."asdfghjkl", ":;", "\"'", ["Enter", 5],
        ["Shift", 5], ..."zxcvbnm", "<,", ">.", "?/", ["up", 2], ["Shift", 4],
        ["Fn", 2], ["Ctrl", 2], ["win", 2], ["Alt", 2], ["", 11], ["Alt", 2], ["Ctrl", 2],
        ["left", 2], ["down", 2], ["right", 2], ["menu", 2],
      ];
      const nav = ["Home", "PgUp", "End", "PgDn", "Insert", "Pause", "PrtScn", "ScrLk", "Options", "Help"];
      const side = ["Nav", "Mv Up", "Mv Dn", "Dock", "Fade"];
      const small = {
        Options: "text-[9px] leading-[22px]",
        PrtScn: "text-[11px] leading-5",
        "Mv Up": "text-[11px] leading-[18px]",
        "Mv Dn": "text-[11px] leading-5",
      };

      function addKey(parent, cls, label) {
        const b = document.createElement("button");
        b.className = KEY + cls;
        if (SVG[label]) {
          b.innerHTML = SVG[label];
          b.setAttribute("aria-label", label);
        } else if (label) {
          b.textContent = label;
        }
        parent.appendChild(b);
        return b;
      }

      const keys = document.getElementById("keys");
      for (const k of main) {
        if (Array.isArray(k)) {
          addKey(keys, "bg-[#323232] px-[3px] text-[12px] leading-[19px] " + SPAN[k[1]], k[0]);
        } else if (k.length === 1) {
          addKey(keys, "bg-[#323232] px-[3px] text-[17px] leading-[21px] col-span-2", k);
        } else {
          const b = addKey(keys, "bg-[#323232] justify-between col-span-2 pr-[6px] pl-[3px]", "");
          const shift = document.createElement("span");
          shift.className = "text-[10px] leading-4 text-[#777]";
          shift.textContent = k[0];
          const base = document.createElement("span");
          base.className = "w-3 self-end pb-[2px] text-center text-[13px] leading-4";
          base.textContent = k[1];
          b.append(shift, base);
        }
      }
      for (const k of nav) {
        const bg = k === "ScrLk" ? "bg-[#0b74da] px-[3px] " : "bg-[#323232] px-[3px] ";
        addKey(document.getElementById("navKeys"), bg + (small[k] || "text-[12px] leading-[19px]"), k);
      }
      for (const k of side) {
        addKey(document.getElementById("sideKeys"), "bg-[#323232] px-[3px] " + (small[k] || "text-[12px] leading-[19px]"), k);
      }

      // cols, rows, depth, cell width, cell height
      for (const svg of document.querySelectorAll("[data-prism]")) {
        const [c, r, d, w, h] = svg.dataset.prism.split(",").map(Number);
        const s = 5.5, W = c * w, H = r * h, D = d * s;
        let path = "";
        for (let i = 0; i <= c; i++) path += `M${i * w} ${D + H}V${D}l${D} ${-D}`;
        for (let j = 0; j <= r; j++) path += `M0 ${D + j * h}H${W}l${D} ${-D}`;
        for (let k = 1; k <= d; k++) path += `M${k * s} ${D - k * s}h${W}v${H}`;
        svg.setAttribute("viewBox", `-0.5 -0.5 ${W + D + 1} ${H + D + 1}`);
        svg.style.width = W + D + 1 + "px";
        svg.style.height = H + D + 1 + "px";
        svg.innerHTML =
          `<path d="M${W} ${D}l${D} ${-D}v${H}l${-D} ${D}z" fill="#d3d0d5"/>` +
          `<path d="${path}" fill="none" stroke="#3a3a3a" stroke-width=".9"/>`;
      }

      const blank = '<span class="text-[11px] leading-none">_______</span>';
      for (const box of document.querySelectorAll("[data-fields]")) {
        box.innerHTML =
          `<p>Length:&nbsp; ${blank} cm</p><p>Width:&nbsp; ${blank} cm</p><p>Height:&nbsp; ${blank} cm</p>` +
          `<p>Volume:&nbsp; ${blank} cm<span class="relative -top-[3px] text-[6px] leading-none">3</span></p>`;
      }
    </script>
  </body>
</html>
